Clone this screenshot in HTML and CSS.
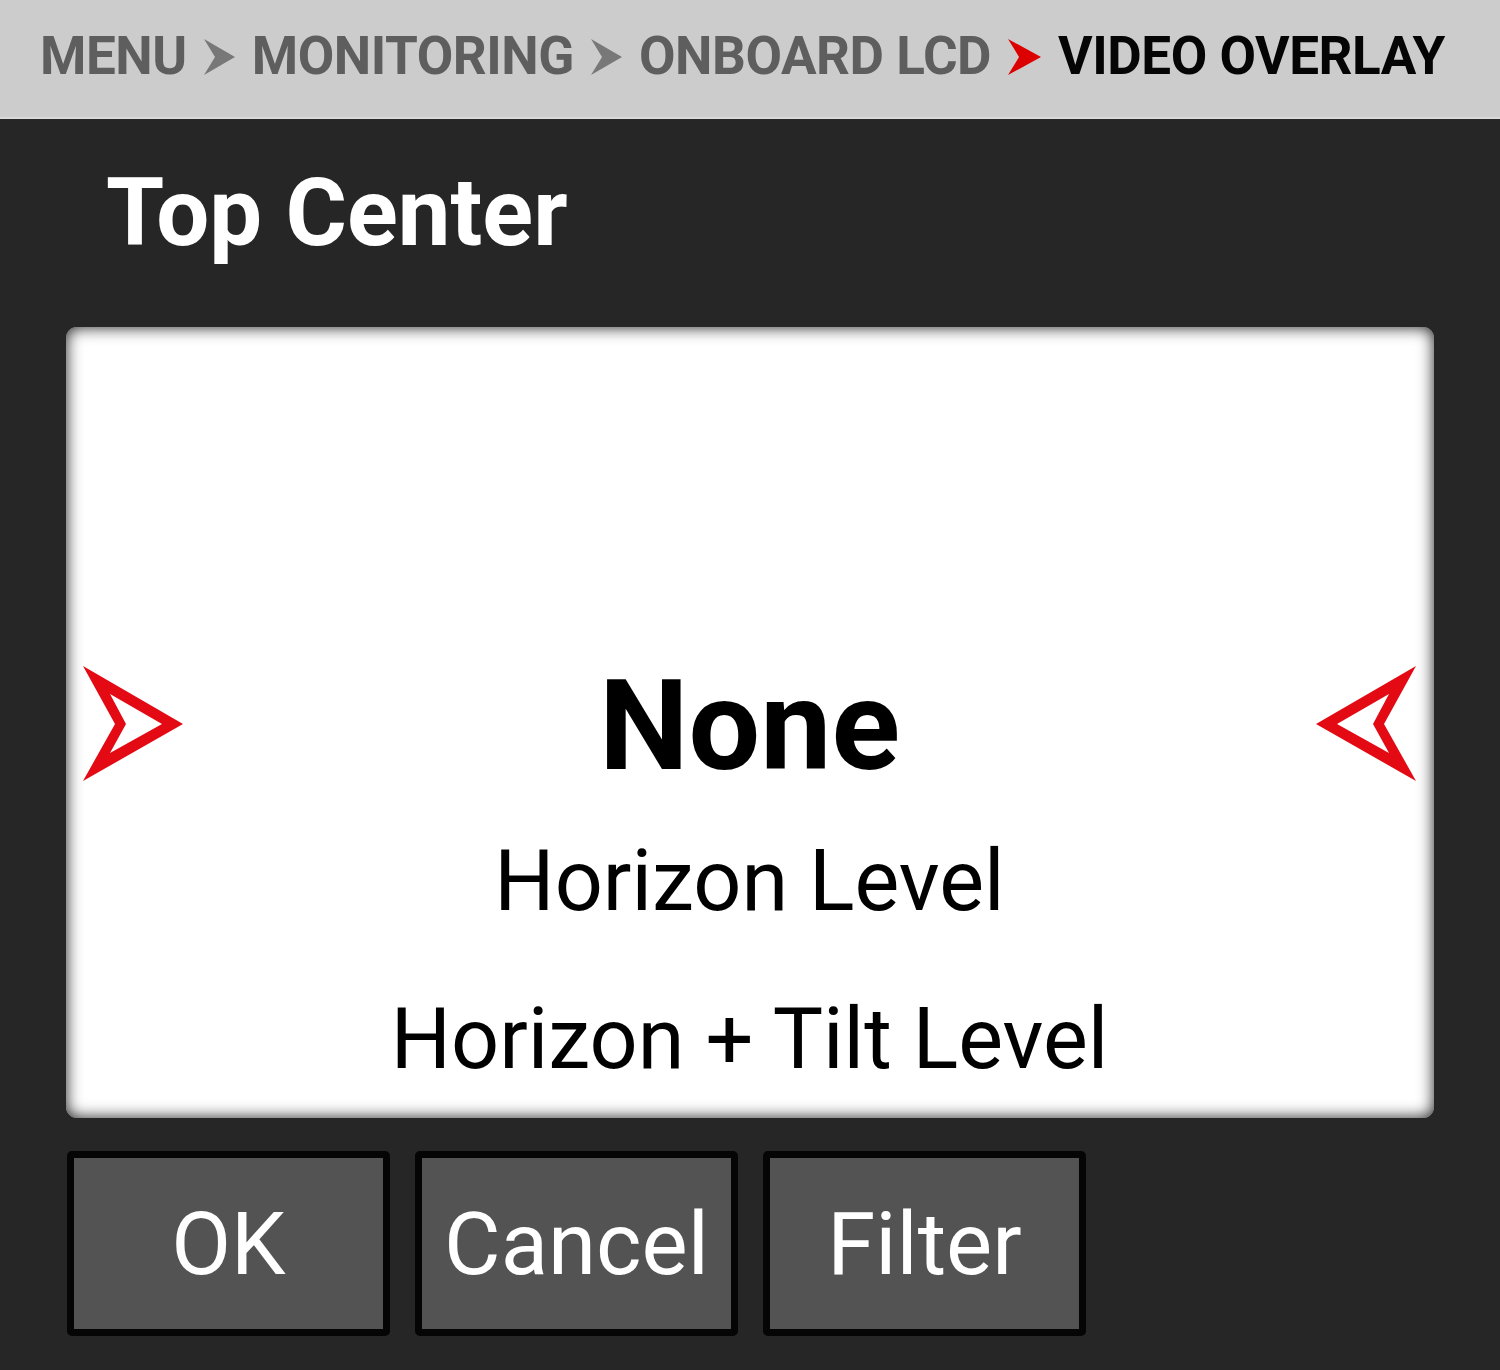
FILE: index.html
```html
<!DOCTYPE html>
<html lang="en">
<head>
<meta charset="utf-8">
<title>Video Overlay - Top Center</title>
<link rel="stylesheet" href="styles.css">
</head>
<body>
<header class="crumbs">
  <span class="crumb">MENU</span>
  <svg class="chev" viewBox="0 0 31 36"><polygon points="0,0 31,18 0,36 11,18" fill="#787878"/></svg>
  <span class="crumb">MONITORING</span>
  <svg class="chev" viewBox="0 0 31 36"><polygon points="0,0 31,18 0,36 11,18" fill="#787878"/></svg>
  <span class="crumb">ONBOARD LCD</span>
  <svg class="chev red" viewBox="0 0 33 36"><polygon points="0,0 33,18 0,36 11,18" fill="#dc0000"/></svg>
  <span class="crumb current">VIDEO OVERLAY</span>
</header>
<main class="main">
  <h1 class="title">Top Center</h1>
  <section class="panel">
    <svg class="arrow" viewBox="0 0 100 115"><path fill-rule="evenodd" fill="#e30a14" d="M0,0 L100,58 L0,115 L32,58 Z M27,28 L79,58 L27,87 L43,58 Z"/></svg>
    <div class="list">
      <div class="item selected">None</div>
      <div class="item">Horizon Level</div>
      <div class="item">Horizon + Tilt Level</div>
    </div>
    <svg class="arrow" viewBox="0 0 100 115"><path fill-rule="evenodd" fill="#e30a14" d="M100,0 L0,58 L100,115 L68,58 Z M73,28 L21,58 L73,87 L57,58 Z"/></svg>
  </section>
  <div class="buttons">
    <div class="btn">OK</div>
    <div class="btn">Cancel</div>
    <div class="btn">Filter</div>
  </div>
</main>
</body>
</html>
```
FILE: styles.css
```css
html, body {
  margin: 0;
  padding: 0;
}
body {
  background: #262626;
  font-family: Roboto, "Liberation Sans", sans-serif;
  width: 1500px;
  height: 1370px;
  overflow: hidden;
}
.crumbs {
  height: 113px;
  padding: 0 0 4px 40px;
  background: #cccccc;
  border-bottom: 2px solid #d9d9d9;
  display: flex;
  align-items: center;
  gap: 17px;
}
.crumb {
  font-size: 53px;
  font-weight: 700;
  line-height: 1;
  letter-spacing: -0.45px;
  color: #5e5e5e;
  white-space: nowrap;
}
.crumb.current {
  color: #050505;
}
.chev {
  width: 31px;
  height: 36px;
  flex: none;
}
.chev.red {
  width: 33px;
}
.main {
  padding: 0 66px;
}
.title {
  margin: 48px 0 0 0;
  padding-left: 40px;
  font-size: 94px;
  line-height: 93px;
  font-weight: 700;
  color: #ffffff;
}
.panel {
  margin-top: 67px;
  height: 791px;
  background: #ffffff;
  border-radius: 11px;
  box-shadow: inset 0 0 16px rgba(0, 0, 0, 0.9);
  display: grid;
  grid-template-columns: 100px 1fr 100px;
  padding: 0 18px 0 17px;
  overflow: hidden;
}
.arrow {
  width: 100px;
  height: 115px;
  align-self: center;
}
.list {
  padding-top: 322px;
  text-align: center;
  color: #000;
}
.item {
  font-size: 84.5px;
  line-height: 158px;
  white-space: nowrap;
}
.item.selected {
  font-size: 127px;
  line-height: 154px;
  font-weight: 700;
}
.buttons {
  margin-top: 33px;
  padding-left: 1px;
  display: flex;
  gap: 25px;
}
.btn {
  box-sizing: border-box;
  width: 323px;
  height: 185px;
  border: 7px solid #050505;
  border-radius: 5px;
  background: #535353;
  color: #ffffff;
  font-size: 87px;
  display: flex;
  align-items: center;
  justify-content: center;
}
```
